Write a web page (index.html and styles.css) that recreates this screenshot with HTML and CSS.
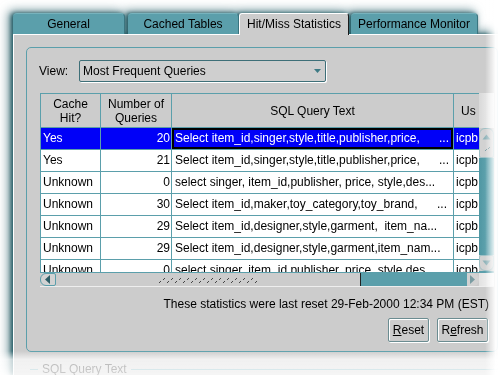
FILE: index.html
```html
<!DOCTYPE html>
<html>
<head>
<meta charset="utf-8">
<link rel="stylesheet" href="styles.css">
</head>
<body>
<div class="window">
  <div class="tabs">
    <div class="tab t1">General</div>
    <div class="tab t2">Cached Tables</div>
    <div class="tab t3 active">Hit/Miss Statistics</div>
    <div class="tab t4">Performance Monitor</div>
  </div>
  <div class="panel">
    <div class="group">
      <div class="view-row">
        <span class="view-label">View:</span>
        <div class="combo">
          <span>Most Frequent Queries</span>
          <svg class="combo-arrow" width="7" height="4" viewBox="0 0 7 4"><path d="M0 0H7L3.5 4Z" fill="#3d7a84"/></svg>
        </div>
      </div>
      <div class="table-area">
        <div class="table-main">
          <div class="grid">
            <div class="hd">Cache<br>Hit?</div>
            <div class="hd">Number of<br>Queries</div>
            <div class="hd">SQL Query Text</div>
            <div class="hd hd-user">Us</div>

            <div class="c sel">Yes</div>
            <div class="c num sel">20</div>
            <div class="c sql sel focus"><span class="t">Select item_id,singer,style,title,publisher,price,</span><span class="d">...</span></div>
            <div class="c u sel">icpb</div>

            <div class="c">Yes</div>
            <div class="c num">21</div>
            <div class="c sql"><span class="t">Select item_id,singer,style,title,publisher,price,</span><span class="d">...</span></div>
            <div class="c u">icpb</div>

            <div class="c">Unknown</div>
            <div class="c num">0</div>
            <div class="c sql"><span class="t">select singer, item_id,publisher, price, style,des...</span></div>
            <div class="c u">icpb</div>

            <div class="c">Unknown</div>
            <div class="c num">30</div>
            <div class="c sql"><span class="t">Select item_id,maker,toy_category,toy_brand,</span><span class="d d2">...</span></div>
            <div class="c u">icpb</div>

            <div class="c">Unknown</div>
            <div class="c num">29</div>
            <div class="c sql"><span class="t">Select item_id,designer,style,garment,  item_na...</span></div>
            <div class="c u">icpb</div>

            <div class="c">Unknown</div>
            <div class="c num">29</div>
            <div class="c sql"><span class="t">Select item_id,designer,style,garment,item_nam...</span></div>
            <div class="c u">icpb</div>

            <div class="c">Unknown</div>
            <div class="c num">0</div>
            <div class="c sql"><span class="t">select singer, item_id,publisher, price, style,des...</span></div>
            <div class="c u">icpb</div>
          </div>
          <div class="vscroll">
            <div class="vcorner"></div>
            <div class="vup">
              <svg width="13" height="28" viewBox="0 0 13 28">
                <path d="M2.5 10.5L6.5 5.5L10.5 10.5Z" fill="#8fb3b9"/>
                <g fill="#7a9ca2">
                  <rect x="5" y="21" width="1" height="1"/><rect x="6" y="20" width="1" height="1"/>
                  <rect x="8" y="19" width="1" height="1"/><rect x="9" y="18" width="1" height="1"/>
                </g>
              </svg>
            </div>
            <div class="vtrough"></div>
            <div class="vdown">
              <svg width="13" height="14" viewBox="0 0 13 14"><path d="M2.5 4.5L10.5 4.5L6.5 9.5Z" fill="#8fb3b9"/></svg>
            </div>
            <div class="vend"></div>
          </div>
        </div>
        <div class="hscroll">
          <div class="hleft"><svg width="6" height="9" viewBox="0 0 6 9"><path d="M5 0V9L0 4.5Z" fill="#2e5f67"/></svg></div>
          <div class="hthumb">
            <svg width="100" height="8" viewBox="0 0 100 8">
              <defs>
                <pattern id="grip" width="8" height="8" patternUnits="userSpaceOnUse">
                  <rect x="1" y="6" width="1" height="1" fill="#444"/>
                  <rect x="2" y="5" width="1" height="1" fill="#444"/>
                  <rect x="5" y="3" width="1" height="1" fill="#444"/>
                  <rect x="6" y="2" width="1" height="1" fill="#444"/>
                </pattern>
              </defs>
              <rect width="100" height="8" fill="url(#grip)"/>
            </svg>
          </div>
          <div class="htrough"></div>
          <div class="hright"><svg width="6" height="9" viewBox="0 0 6 9"><path d="M0 0V9L5 4.5Z" fill="#7a9ca2"/></svg></div>
          <div class="hcorner"></div>
        </div>
      </div>
      <div class="status">These statistics were last reset 29-Feb-2000 12:34 PM (EST)</div>
      <div class="buttons">
        <button class="btn btn-reset"><u>R</u>eset</button>
        <button class="btn btn-refresh">R<u>e</u>fresh</button>
      </div>
    </div>
    <div class="group2"><span>SQL Query Text</span></div>
  </div>
</div>
<div class="fade-right"></div>
<div class="fade-bottom"></div>
</body>
</html>
```
FILE: styles.css
```css
* { box-sizing: border-box; }
html, body { margin: 0; padding: 0; }
body {
  width: 498px;
  height: 375px;
  overflow: hidden;
  position: relative;
  background: #fff;
  font-family: "Liberation Sans", Arial, sans-serif;
  font-size: 12px;
  color: #000;
}
.window {
  margin: 13px 0 0 13px;
  width: 490px;
  filter: drop-shadow(-2px 0 2px rgba(20, 80, 90, 0.9)) drop-shadow(-3px -2px 5px rgba(60, 110, 120, 0.7));
}
.tabs {
  display: flex;
  height: 21px;
  align-items: flex-start;
}
.tab {
  height: 21px;
  background: #5b9fab;
  border-radius: 4px 4px 0 0;
  border-top: 1px solid #77b3bd;
  border-right: 1px solid #3a7580;
  display: flex;
  align-items: center;
  justify-content: center;
  white-space: nowrap;
}
.t1 { width: 112px; }
.t2 { width: 111px; margin-left: 3px; }
.t3 { width: 110px; }
.t4 { width: 127px; margin-left: 2px; }
.tab.active {
  background: #ccc;
  border-top: 1px solid #fff;
  border-left: 1px solid #fff;
  border-right: 1px solid #1c1c1c;
  border-radius: 3px 3px 0 0;
  height: 22px;
  position: relative;
  z-index: 1;
  padding-bottom: 1px;
}
.panel {
  background: #ccc;
  border-top: 1px solid #fff;
  border-left: 1px solid #fff;
  height: 341px;
  padding: 12px 0 0 12px;
}
.group {
  width: 472px;
  border: 1px solid #5b9fab;
  border-radius: 5px;
  padding: 12px 3px 9px 13px;
}
.view-row {
  display: flex;
  align-items: center;
  height: 22px;
  margin-left: -1px;
}
.view-label { width: 40px; }
.combo {
  width: 247px;
  height: 22px;
  border: 1px solid #3e6f78;
  border-radius: 2px;
  background: #cfcfcf;
  box-shadow: 1px 1px 0 #fff;
  display: flex;
  align-items: center;
  justify-content: space-between;
  padding: 0 4px 0 3px;
}
.table-area { margin-top: 11px; }
.table-main { display: flex; }
.grid {
  width: 439px;
  height: 179px;
  overflow: hidden;
  border-left: 1px solid #5b9fab;
  border-top: 1px solid #5b9fab;
  display: grid;
  grid-template-columns: 60px 71px 282px 25px;
  grid-template-rows: 34px;
  grid-auto-rows: 22px;
  align-content: start;
}
.hd {
  background: #ccc;
  border-right: 1px solid #5b9fab;
  border-bottom: 1px solid #5b9fab;
  display: flex;
  align-items: center;
  justify-content: center;
  text-align: center;
  line-height: 14px;
  white-space: nowrap;
  overflow: hidden;
}
.hd-user {
  border-right: none;
  justify-content: flex-start;
  padding-left: 7px;
}
.c {
  background: #fff;
  border-right: 1px solid #5b9fab;
  border-bottom: 1px solid #5b9fab;
  line-height: 21px;
  white-space: pre;
  overflow: hidden;
  padding: 0 2px;
}
.num { text-align: right; padding-right: 1px; }
.sql { display: flex; padding-left: 3px; }
.sql .t { flex: 1; overflow: hidden; }
.sql .d { padding-right: 2px; }
.sql .d2 { padding-right: 4px; }
.u { border-right: none; }
.sel { background: #0000f8; color: #fff; }
.focus { box-shadow: inset 0 0 0 2px #000; }

.vscroll {
  width: 15px;
  height: 179px;
  display: flex;
  flex-direction: column;
}
.vcorner {
  height: 35px;
  background: linear-gradient(to right, #d9d9d9, #f2f2f2);
}
.vup {
  height: 30px;
  background: #d2d2d2;
  border: 1px solid #9fc0c5;
  border-radius: 6px 6px 2px 2px;
  display: flex;
  justify-content: center;
}
.vtrough {
  flex: 1;
  background: linear-gradient(to right, #4f97a3, #6eaeb8);
}
.vdown {
  height: 16px;
  background: #d2d2d2;
  border: 1px solid #9fc0c5;
  border-radius: 2px 2px 6px 6px;
  display: flex;
  justify-content: center;
}
.vend { height: 1px; background: #5b9fab; }

.hscroll {
  display: flex;
  height: 14px;
  border-top: 1px solid #5b9fab;
  box-shadow: 0 1px 0 #eee;
}
.hleft {
  width: 16px;
  background: #d2d2d2;
  border: 1px solid #5b9fab;
  border-radius: 6px 2px 2px 6px;
  display: flex;
  align-items: center;
  justify-content: center;
}
.hthumb {
  width: 305px;
  background: #ccc;
  border-right: 1px solid #222;
  display: flex;
  align-items: center;
  justify-content: center;
}
.htrough { flex: 1; background: #5b9fab; }
.hright {
  width: 12px;
  background: #d2d2d2;
  border-radius: 2px 6px 6px 2px;
  display: flex;
  align-items: center;
  justify-content: center;
}
.hcorner {
  width: 15px;
  background: linear-gradient(to right, #e2e2e2, #f6f6f6);
}

.status {
  margin-top: 10px;
  line-height: 16px;
  text-align: right;
  padding-right: 5px;
  white-space: nowrap;
}
.buttons {
  display: flex;
  justify-content: flex-end;
  gap: 8px;
  margin-top: 6px;
  padding-right: 6px;
}
.btn {
  height: 24px;
  padding: 0;
  margin: 0;
  font-family: "Liberation Sans", Arial, sans-serif;
  font-size: 12px;
  color: #000;
  background: #ccc;
  border: 1px solid #6b8c91;
  border-radius: 2px;
  box-shadow: inset 1px 1px 0 #fff, 1px 1px 0 #fff;
}
.btn-reset { width: 41px; }
.btn-refresh { width: 51px; }

.group2 {
  display: flex;
  align-items: center;
  height: 14px;
  margin: 10px 0 0 4px;
  white-space: nowrap;
}
.group2::before {
  content: "";
  width: 8px;
  border-top: 1px solid #5b9fab;
}
.group2 span { padding: 0 4px; }
.group2::after {
  content: "";
  flex: 1;
  border-top: 1px solid #5b9fab;
}

.fade-right {
  position: absolute;
  top: 0;
  left: 485px;
  width: 13px;
  height: 375px;
  background: linear-gradient(to right, rgba(255,255,255,0), rgba(255,255,255,0.95) 80%);
}
.fade-bottom {
  position: absolute;
  left: 0;
  top: 351px;
  width: 498px;
  height: 24px;
  background: linear-gradient(to bottom, rgba(255,255,255,0), rgba(255,255,255,0.72) 35%, rgba(255,255,255,0.8));
}
```
